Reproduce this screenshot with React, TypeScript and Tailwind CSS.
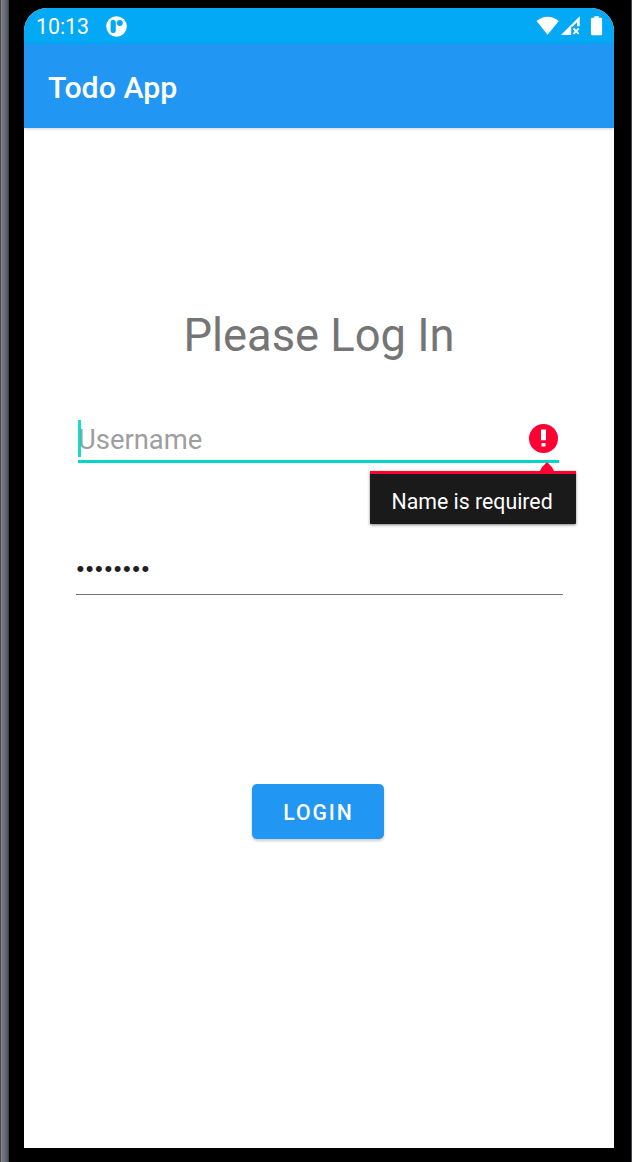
function StatusBar() {
  return (
    <div className="flex h-9 shrink-0 items-center bg-[#03a9f4] pl-3 pr-[10px] text-white">
      <span className="w-[53px] whitespace-nowrap pt-0.5 text-[21.3px] leading-9">10:13</span>
      <svg className="ml-[16.5px] size-[21px]" viewBox="0 0 21 21">
        <circle cx="10.5" cy="10.5" r="10.3" fill="#fff" />
        <rect x="4.6" y="4" width="5.2" height="13" rx="2.2" fill="#03a9f4" />
        <circle cx="13.8" cy="7" r="3" fill="#03a9f4" />
        <path d="M5.8 5.2h2v10.6h-2z" fill="#03a9f4" />
      </svg>
      <svg className="ml-auto h-[22px] w-[68px]" viewBox="0 0 68 22" fill="#fff">
        <path d="M0.5 6Q11.5-2.6 22.8 6L11.6 19.7Z" />
        <path fillRule="evenodd" d="M25 20L43.7 1.3V11.2H41V7.2L36.8 11.4H35.2V20Z" />
        <path d="M37.5 13.5L42.7 18.8M42.7 13.5L37.5 18.8" stroke="#fff" strokeWidth="1.8" />
        <path d="M58.3 1.3h4.6v1.5h2q1.2 0 1.2 1.2v15q0 1.3-1.2 1.3h-8.8q-1.2 0-1.2-1.3V4q0-1.2 1.2-1.2h2.2z" />
      </svg>
    </div>
  );
}

function ErrorPopup() {
  return (
    <div className="absolute left-[292px] top-[42px] w-[206px]">
      <svg className="ml-[169px] block h-[9px] w-4" viewBox="0 0 16 9">
        <path d="M1 9Q2.2 5 7 1Q8 0 9 1Q13.8 5 15 9Z" fill="#ff0033" />
      </svg>
      <div className="h-[53px] rounded-b-[1px] border-t-3 border-[#ff0033] bg-[#1a1a1a] pl-[21.5px] pt-[13px] text-[21.3px] leading-[30px] whitespace-nowrap text-white shadow-[0_1px_3px_rgba(0,0,0,0.5)]">
        Name is required
      </div>
    </div>
  );
}

export default function App() {
  return (
    <div className="flex h-[1162px] w-[632px] overflow-hidden bg-black font-['Roboto',sans-serif]">
      <div className="w-[9px] shrink-0 bg-[linear-gradient(90deg,#4b4c50_0px,#4b4c50_1px,#85868c_1px,#73757e_3px,#686b76_5px,#5b5f69_7px,#343840_9px)]" />
      <div className="flex flex-1 px-[15px] pt-2 pb-3.5">
        <main className="flex w-[590px] flex-col overflow-hidden rounded-t-[23px] bg-white">
          <StatusBar />
          <header className="relative flex h-[84px] shrink-0 items-center bg-[#2196f3] pl-6 pt-1 text-[30.3px] font-medium text-white shadow-[0_1px_3px_rgba(0,0,0,0.18)]">
            Todo App
          </header>
          <h1 className="mt-[178px] text-center text-[45.3px] leading-[60px] text-[#757575]">Please Log In</h1>
          <div className="relative ml-[54px] mt-[54px] flex h-[43px] w-[481px] items-start border-b-3 border-[#00d8c4] text-[27.4px] leading-10 text-[#9e9e9e]">
            <span>Username</span>
            <i className="absolute left-0 top-0 h-[37px] w-[3px] bg-[#00d8c4]/90" />
            <svg className="ml-auto mr-px mt-1 size-[29px]" viewBox="0 0 29 29">
              <circle cx="14.5" cy="14.5" r="14.5" fill="#ff0033" />
              <path d="M12 5.5h5v10.8h-5zm.5 13.4h4v3.6h-4z" fill="#fff" />
            </svg>
            <ErrorPopup />
          </div>
          <div className="ml-[52px] mt-[87px] h-[45px] w-[487px] border-b border-[#757575] pl-[0.5px] font-['Liberation_Sans',sans-serif] text-[22px] leading-[37px] tracking-[1.6px] text-[#212121]">
            ••••••••
          </div>
          <button className="ml-[228px] mt-[189px] h-[55px] w-[132px] shrink-0 rounded-[5px] bg-[#2196f3] pl-px pt-[3px] text-[21.2px] font-medium tracking-[1.9px] text-white shadow-[0_2px_3px_rgba(0,0,0,0.2)]">
            LOGIN
          </button>
        </main>
      </div>
      <div className="w-px shrink-0 bg-[#48494c]" />
    </div>
  );
}
